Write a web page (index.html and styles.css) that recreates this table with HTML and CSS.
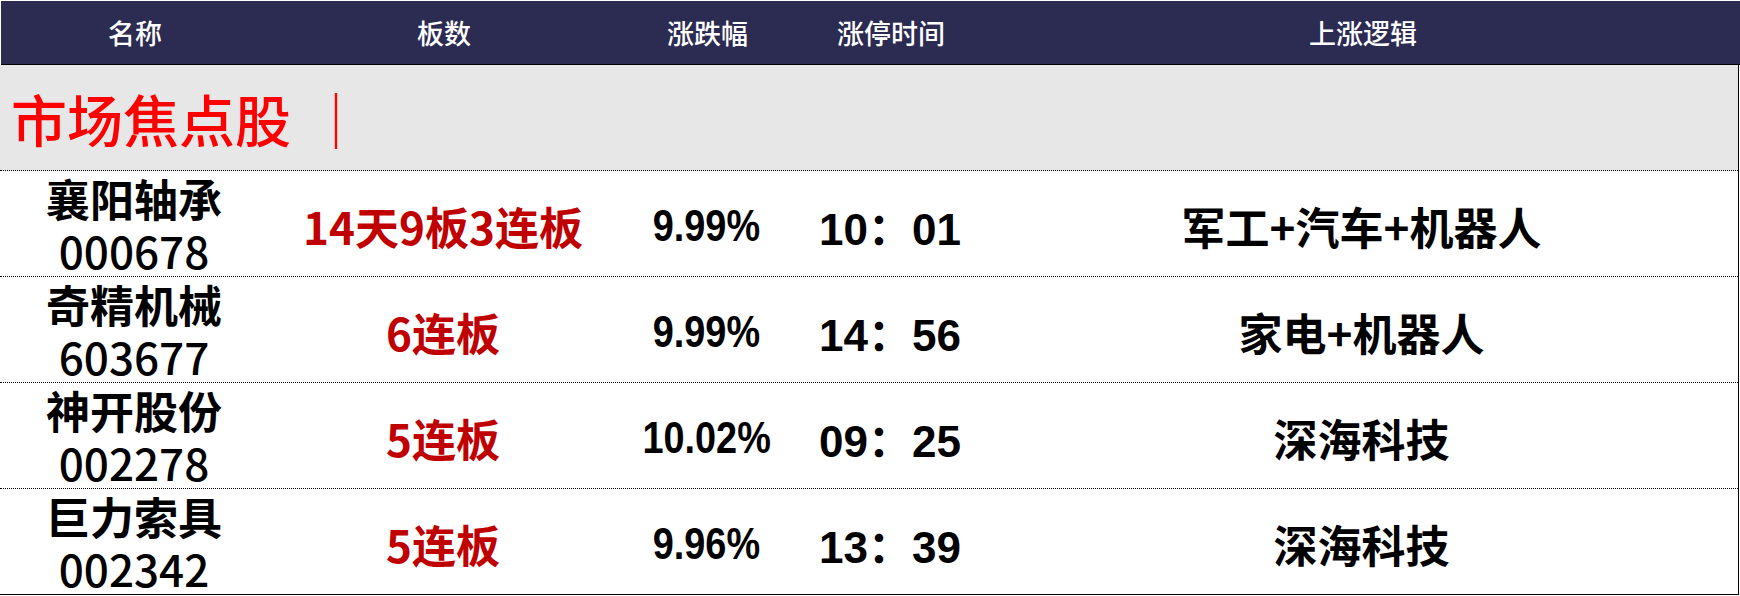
FILE: index.html
```html
<!DOCTYPE html>
<html lang="zh-CN">
<head>
<meta charset="utf-8">
<title>市场焦点股</title>
<link rel="stylesheet" href="styles.css">
</head>
<body>
<div class="sheet">
  <div class="head">
    <div class="hc">名称</div>
    <div class="hc">板数</div>
    <div class="hc">涨跌幅</div>
    <div class="hc">涨停时间</div>
    <div class="hc">上涨逻辑</div>
  </div>
  <div class="body">
    <div class="title">市场焦点股<span class="bar">｜</span></div>
    <div class="row">
      <div class="c name"><span>襄阳轴承</span><span class="code">000678</span></div>
      <div class="c boards">14天9板3连板</div>
      <div class="c num"><span class="narrow">9.99%</span></div>
      <div class="c num">10：01</div>
      <div class="c logic">军工+汽车+机器人</div>
    </div>
    <div class="row">
      <div class="c name"><span>奇精机械</span><span class="code">603677</span></div>
      <div class="c boards">6连板</div>
      <div class="c num"><span class="narrow">9.99%</span></div>
      <div class="c num">14：56</div>
      <div class="c logic">家电+机器人</div>
    </div>
    <div class="row">
      <div class="c name"><span>神开股份</span><span class="code">002278</span></div>
      <div class="c boards">5连板</div>
      <div class="c num"><span class="narrow">10.02%</span></div>
      <div class="c num">09：25</div>
      <div class="c logic">深海科技</div>
    </div>
    <div class="row last">
      <div class="c name"><span>巨力索具</span><span class="code">002342</span></div>
      <div class="c boards">5连板</div>
      <div class="c num"><span class="narrow">9.96%</span></div>
      <div class="c num">13：39</div>
      <div class="c logic">深海科技</div>
    </div>
  </div>
</div>
</body>
</html>
```
FILE: styles.css
```css
html, body {
  margin: 0;
  padding: 0;
  background: #ffffff;
}

.sheet {
  width: 1740px;
  padding-top: 1px;
  font-family: "Noto Sans CJK SC", sans-serif;
}

.head {
  display: grid;
  grid-template-columns: 268px 350px 177px 190px 1fr;
  height: 63px;
  margin-left: 1px;
  background: #2c2b52;
  border-bottom: 1px solid #000;
  color: #ffffff;
  font-size: 27px;
  font-weight: 500;
}

.hc {
  display: flex;
  align-items: center;
  justify-content: center;
}

.body {
  width: 1738px;
  border-right: 1px solid #000;
}

.title {
  display: flex;
  align-items: center;
  height: 106px;
  box-sizing: border-box;
  padding-left: 11px;
  background: #e7e7e7;
  border-bottom: 1px dotted #000;
  color: #ff0000;
  font-size: 56px;
  font-weight: 500;
  line-height: 1;
}

.bar {
  margin-left: 17px;
  font-weight: 400;
}

.row {
  display: grid;
  grid-template-columns: 268px 350px 177px 190px 1fr;
  height: 106px;
  box-sizing: border-box;
  border-bottom: 1px dotted #000;
  font-size: 44px;
  color: #000;
}

.row.last {
  border-bottom: 1px solid #000;
}

.c {
  display: flex;
  align-items: center;
  justify-content: center;
  padding-top: 4px;
}

.name {
  flex-direction: column;
  font-weight: 700;
  line-height: 52px;
  padding-top: 0;
}

.code {
  font-weight: 500;
}

.boards {
  color: #c00000;
  font-weight: 700;
}

.num {
  font-family: "Liberation Sans", "Noto Sans CJK SC", sans-serif;
  font-weight: 700;
}

.narrow {
  display: inline-block;
  transform: scaleX(0.86);
}

.logic {
  font-weight: 700;
}
```
